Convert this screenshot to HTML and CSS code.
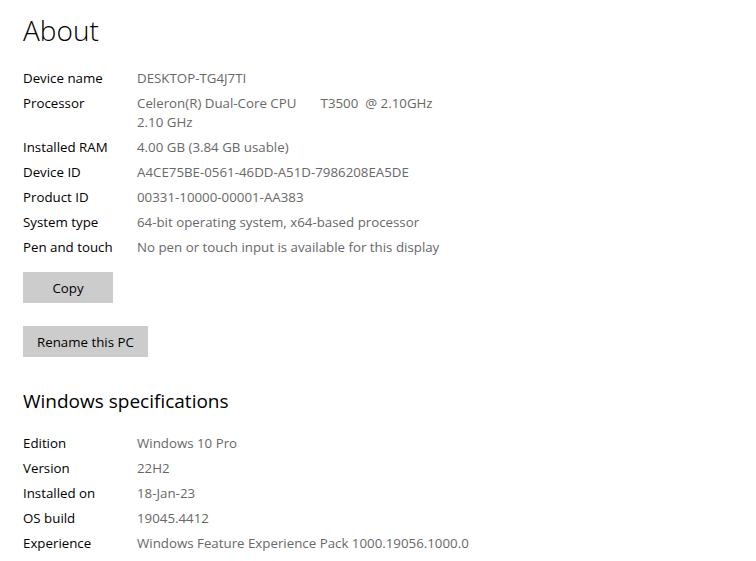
FILE: index.html
```html
<!DOCTYPE html>
<html>
<head>
<meta charset="utf-8">
<link rel="stylesheet" href="styles.css">
</head>
<body>
<main class="page">
  <h1 class="title">About</h1>
  <dl class="specs">
    <div class="row"><dt>Device name</dt><dd>DESKTOP-TG4J7TI</dd></div>
    <div class="row"><dt>Processor</dt><dd><span class="pre">Celeron(R) Dual-Core CPU       T3500  @ 2.10GHz</span><br>2.10 GHz</dd></div>
    <div class="row"><dt>Installed RAM</dt><dd>4.00 GB (3.84 GB usable)</dd></div>
    <div class="row"><dt>Device ID</dt><dd>A4CE75BE-0561-46DD-A51D-7986208EA5DE</dd></div>
    <div class="row"><dt>Product ID</dt><dd>00331-10000-00001-AA383</dd></div>
    <div class="row"><dt>System type</dt><dd>64-bit operating system, x64-based processor</dd></div>
    <div class="row"><dt>Pen and touch</dt><dd>No pen or touch input is available for this display</dd></div>
  </dl>
  <div class="buttons">
    <button class="btn btn-copy">Copy</button>
    <button class="btn">Rename this PC</button>
  </div>
  <h2 class="subtitle">Windows specifications</h2>
  <dl class="specs">
    <div class="row"><dt>Edition</dt><dd>Windows 10 Pro</dd></div>
    <div class="row"><dt>Version</dt><dd>22H2</dd></div>
    <div class="row"><dt>Installed on</dt><dd>18-Jan-23</dd></div>
    <div class="row"><dt>OS build</dt><dd>19045.4412</dd></div>
    <div class="row"><dt>Experience</dt><dd>Windows Feature Experience Pack 1000.19056.1000.0</dd></div>
  </dl>
</main>
</body>
</html>
```
FILE: styles.css
```css
html, body {
  margin: 0;
  background: #fff;
}
.page {
  padding: 10px 0 0 23px;
  font-family: "Open Sans", "Noto Sans", sans-serif;
  font-size: 13.3px;
  color: #000;
}
.title {
  margin: 0;
  font-weight: 300;
  font-size: 28px;
  line-height: 40px;
  height: 56px;
}
.specs {
  margin: 0;
  display: flex;
  flex-direction: column;
}
.row {
  display: flex;
  padding: 3px 0;
  line-height: 19px;
}
.row dt {
  width: 114px;
  flex: none;
}
.row dd {
  margin: 0;
  color: #686868;
}
.pre {
  white-space: pre;
}
.buttons {
  display: flex;
  flex-direction: column;
  align-items: flex-start;
  gap: 23px;
  margin-top: 12px;
}
.btn {
  font-family: inherit;
  font-size: 13.3px;
  color: #000;
  background: #ccc;
  border: none;
  height: 31px;
  padding: 0 14px;
}
.btn-copy {
  width: 90px;
}
.subtitle {
  margin: 29px 0 15px;
  font-weight: 400;
  font-size: 19px;
  line-height: 30px;
}
```
